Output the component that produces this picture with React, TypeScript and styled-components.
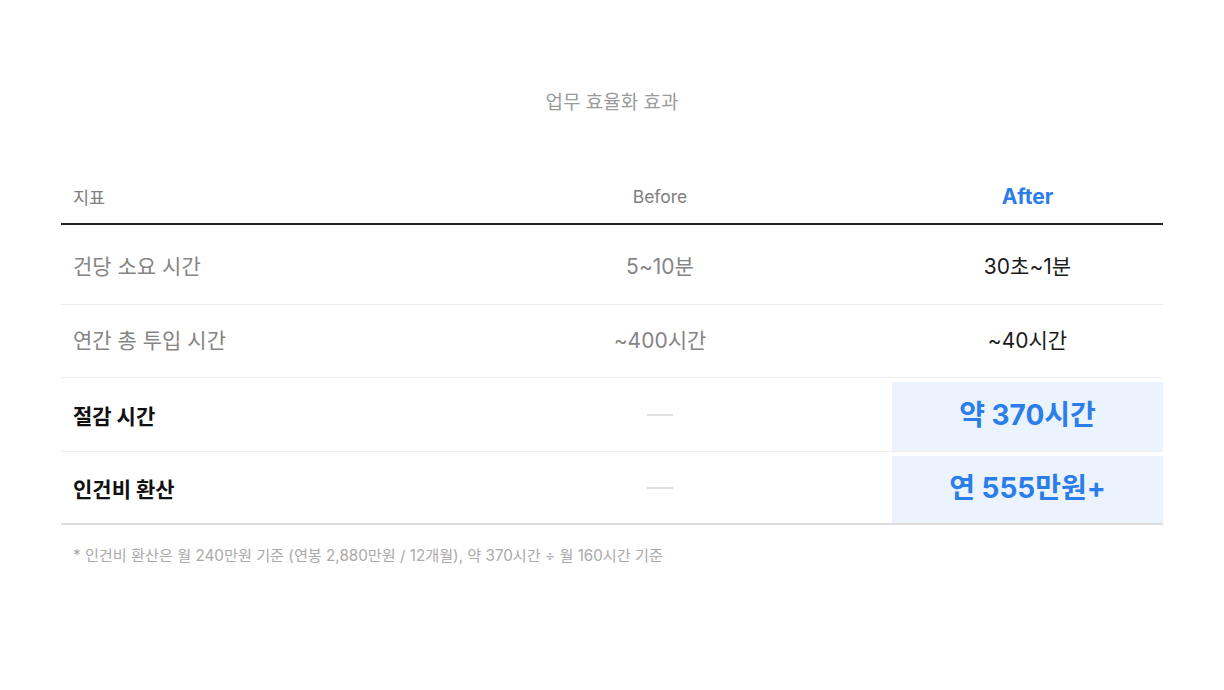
import * as React from 'react';
import styled, { createGlobalStyle } from 'styled-components';

const GlobalStyle = createGlobalStyle`
  html, body {
    margin: 0;
    padding: 0;
    background: #fff;
  }
  body {
    font-family: Inter, 'Noto Sans CJK KR', sans-serif;
    -webkit-font-smoothing: antialiased;
  }
`;

const Page = styled.div`
  width: 1102px;
  margin: 0 auto;
  padding-top: 89px;
`;

const Title = styled.h2`
  margin: 0 0 52px;
  height: 28px;
  line-height: 28px;
  text-align: center;
  font-size: 19px;
  font-weight: 400;
  color: #9a9a9a;
`;

const Table = styled.div`
  border-bottom: 2px solid #ddd;
`;

const Row = styled.div<{ $height: number; $padTop?: number; $head?: boolean }>`
  display: grid;
  grid-template-columns: 367px 464px 271px;
  height: ${p => p.$height}px;
  padding-top: ${p => p.$padTop ?? 0}px;
  box-sizing: content-box;
  border-bottom: ${p => (p.$head ? '2px solid #222' : '1px solid #eee')};
  &:last-child {
    border-bottom: none;
  }
`;

const Cell = styled.div<{ $align?: 'left' | 'center'; $highlight?: boolean; $lift?: number }>`
  display: flex;
  align-items: center;
  justify-content: ${p => (p.$align === 'left' ? 'flex-start' : 'center')};
  padding-left: ${p => (p.$align === 'left' ? '12px' : '0')};
  padding-bottom: ${p => p.$lift ?? 0}px;
  background: ${p => (p.$highlight ? '#ebf3fe' : 'transparent')};
`;

const HeadText = styled.span<{ $accent?: boolean }>`
  font-size: ${p => (p.$accent ? '21px' : '17.5px')};
  font-weight: ${p => (p.$accent ? 700 : 400)};
  color: ${p => (p.$accent ? '#2b7de9' : '#808080')};
`;

const Label = styled.span<{ $strong?: boolean }>`
  font-size: 21px;
  font-weight: ${p => (p.$strong ? 700 : 400)};
  color: ${p => (p.$strong ? '#111' : '#858585')};
`;

const Value = styled.span<{ $tone: 'before' | 'after' }>`
  font-size: 21px;
  color: ${p => (p.$tone === 'before' ? '#858585' : '#1a1a1a')};
`;

const Dash = styled.span`
  display: block;
  width: 26px;
  height: 2px;
  margin-top: 1px;
  background: #e0e0e0;
`;

const Result = styled.span`
  font-size: 28px;
  font-weight: 700;
  color: #2b7de9;
  margin-top: -4px;
`;

const Note = styled.p`
  margin: 18px 0 0 12px;
  font-size: 15.2px;
  color: #aaa;
`;

type Line = {
  label: string;
  strong?: boolean;
  before?: string;
  after: string;
  height: number;
  padTop?: number;
};

const lines: Line[] = [
  { label: '건당 소요 시간', before: '5~10분', after: '30초~1분', height: 74, padTop: 5 },
  { label: '연간 총 투입 시간', before: '~400시간', after: '~40시간', height: 72 },
  { label: '절감 시간', strong: true, after: '약 370시간', height: 69, padTop: 4 },
  { label: '인건비 환산', strong: true, after: '연 555만원+', height: 67, padTop: 4 },
];

export default function App() {
  return (
    <>
      <GlobalStyle />
      <Page>
        <Title>업무 효율화 효과</Title>
        <Table>
          <Row $height={54} $head>
            <Cell $align="left">
              <HeadText>지표</HeadText>
            </Cell>
            <Cell>
              <HeadText>Before</HeadText>
            </Cell>
            <Cell>
              <HeadText $accent>After</HeadText>
            </Cell>
          </Row>
          {lines.map(line => (
            <Row key={line.label} $height={line.height} $padTop={line.padTop}>
              <Cell $align="left" $lift={4}>
                <Label $strong={line.strong}>{line.label}</Label>
              </Cell>
              <Cell $lift={4}>
                {line.before ? <Value $tone="before">{line.before}</Value> : <Dash />}
              </Cell>
              <Cell $highlight={line.strong} $lift={4}>
                {line.strong ? <Result>{line.after}</Result> : <Value $tone="after">{line.after}</Value>}
              </Cell>
            </Row>
          ))}
        </Table>
        <Note>* 인건비 환산은 월 240만원 기준 (연봉 2,880만원 / 12개월), 약 370시간 ÷ 월 160시간 기준</Note>
      </Page>
    </>
  );
}
